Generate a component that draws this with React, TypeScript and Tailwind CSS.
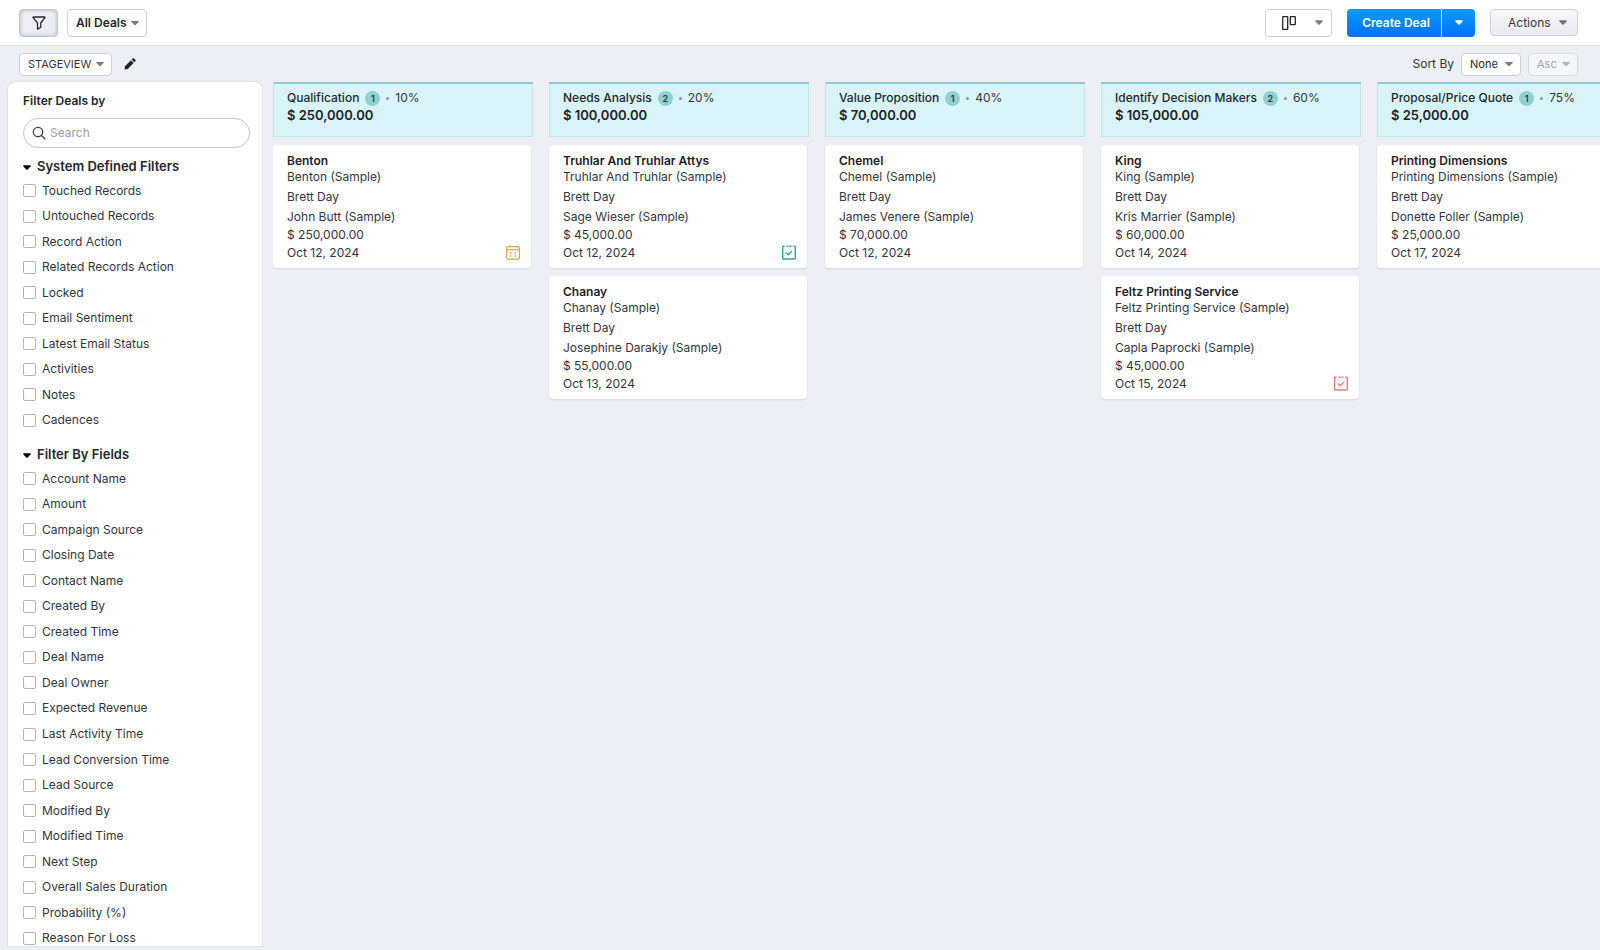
import { useState } from 'react';
import clsx from 'clsx';

type Activity = 'event' | 'task' | 'overdue';

interface Deal {
  name: string;
  account: string;
  contact: string;
  amount: string;
  closing: string;
  activity?: Activity;
}

interface Stage {
  name: string;
  probability: string;
  total: string;
  deals: Deal[];
}

const OWNER = 'Brett Day';

const STAGES: Stage[] = [
  {
    name: 'Qualification',
    probability: '10%',
    total: '$ 250,000.00',
    deals: [
      { name: 'Benton', account: 'Benton (Sample)', contact: 'John Butt (Sample)', amount: '$ 250,000.00', closing: 'Oct 12, 2024', activity: 'event' },
    ],
  },
  {
    name: 'Needs Analysis',
    probability: '20%',
    total: '$ 100,000.00',
    deals: [
      { name: 'Truhlar And Truhlar Attys', account: 'Truhlar And Truhlar (Sample)', contact: 'Sage Wieser (Sample)', amount: '$ 45,000.00', closing: 'Oct 12, 2024', activity: 'task' },
      { name: 'Chanay', account: 'Chanay (Sample)', contact: 'Josephine Darakjy (Sample)', amount: '$ 55,000.00', closing: 'Oct 13, 2024' },
    ],
  },
  {
    name: 'Value Proposition',
    probability: '40%',
    total: '$ 70,000.00',
    deals: [
      { name: 'Chemel', account: 'Chemel (Sample)', contact: 'James Venere (Sample)', amount: '$ 70,000.00', closing: 'Oct 12, 2024' },
    ],
  },
  {
    name: 'Identify Decision Makers',
    probability: '60%',
    total: '$ 105,000.00',
    deals: [
      { name: 'King', account: 'King (Sample)', contact: 'Kris Marrier (Sample)', amount: '$ 60,000.00', closing: 'Oct 14, 2024' },
      { name: 'Feltz Printing Service', account: 'Feltz Printing Service (Sample)', contact: 'Capla Paprocki (Sample)', amount: '$ 45,000.00', closing: 'Oct 15, 2024', activity: 'overdue' },
    ],
  },
  {
    name: 'Proposal/Price Quote',
    probability: '75%',
    total: '$ 25,000.00',
    deals: [
      { name: 'Printing Dimensions', account: 'Printing Dimensions (Sample)', contact: 'Donette Foller (Sample)', amount: '$ 25,000.00', closing: 'Oct 17, 2024' },
    ],
  },
];

const SYSTEM_FILTERS = [
  'Touched Records', 'Untouched Records', 'Record Action', 'Related Records Action', 'Locked',
  'Email Sentiment', 'Latest Email Status', 'Activities', 'Notes', 'Cadences',
];

const FIELD_FILTERS = [
  'Account Name', 'Amount', 'Campaign Source', 'Closing Date', 'Contact Name', 'Created By',
  'Created Time', 'Deal Name', 'Deal Owner', 'Expected Revenue', 'Last Activity Time',
  'Lead Conversion Time', 'Lead Source', 'Modified By', 'Modified Time', 'Next Step',
  'Overall Sales Duration', 'Probability (%)', 'Reason For Loss',
];

function Caret({ className }: { className?: string }) {
  return (
    <svg viewBox="0 0 8 5" className={clsx('w-2 h-[5px] shrink-0', className)} fill="currentColor" aria-hidden="true">
      <path d="M.9.3h6.2c.6 0 .9.7.5 1.1L4.6 4.5a.8.8 0 0 1-1.2 0L.4 1.4C0 1 .3.3.9.3Z" />
    </svg>
  );
}

interface PickerProps {
  label: string;
  value: string;
  className: string;
  caretClass: string;
  disabled?: boolean;
}

function Picker({ label, value, className, caretClass, disabled }: PickerProps) {
  return (
    <div className="relative flex">
      <select
        aria-label={label}
        disabled={disabled}
        defaultValue={value}
        className={clsx('appearance-none rounded border', className)}
      >
        <option>{value}</option>
      </select>
      <Caret className={clsx('absolute top-1/2 -translate-y-1/2 pointer-events-none', caretClass)} />
    </div>
  );
}

function ActivityIcon({ kind }: { kind: Activity }) {
  if (kind === 'event') {
    return (
      <svg viewBox="0 0 14 15" className="w-3.5 h-[15px] text-[#d9a441]" fill="none" stroke="currentColor" role="img" aria-label="Event">
        <rect x=".6" y="1.6" width="12.8" height="12.6" rx="1.6" strokeWidth="1.2" />
        <path d="M.8 4.8h12.4" strokeWidth="1.1" />
        <path d="M3.6.4v2M10.4.4v2" strokeWidth="1.3" />
        <path d="M3.8 8h1.6M8.6 8h1.6M3.8 11h1.6M8.6 11h1.6" strokeWidth="1.6" />
        <path d="M6.5 8h1M6.5 11h1" strokeWidth="1" opacity=".5" />
      </svg>
    );
  }
  return (
    <svg
      viewBox="0 0 14 15"
      className={clsx('w-3.5 h-[15px]', kind === 'task' ? 'text-[#2ea58c]' : 'text-[#dc7f7d]')}
      fill="none"
      stroke="currentColor"
      role="img"
      aria-label={kind === 'task' ? 'Task' : 'Overdue task'}
    >
      <path d="M2.6 1.2H1.3a.6.6 0 0 0-.6.6v11.4c0 .5.3.8.8.8h11c.5 0 .8-.3.8-.8V1.8a.6.6 0 0 0-.6-.6h-1.3" strokeWidth="1.4" />
      <path d="M4.6 1.2h4.8" strokeWidth="1.4" strokeDasharray="2 .8" />
      <path d="m4 7.6 2.2 2.1 3.8-3.8" strokeWidth="1.4" />
    </svg>
  );
}

function FilterGroup({ title, items, listClass }: { title: string; items: string[]; listClass: string }) {
  const [open, setOpen] = useState(true);

  return (
    <section>
      <button
        type="button"
        aria-expanded={open}
        onClick={() => setOpen(!open)}
        className="flex items-center gap-1.5 h-6 pt-0.5 text-[13px] font-semibold text-[#24262f]"
      >
        <Caret className="text-black" />
        {title}
      </button>
      {open && (
        <ul className={clsx('grid auto-rows-fr', listClass)}>
          {items.map(item => (
            <li key={item} className="flex items-center">
              <label className="flex items-center gap-1.5">
                <input type="checkbox" className="appearance-none w-[13px] h-[13px] rounded-xs border border-[#b4b4b8] bg-white checked:bg-[#0279ff]" />
                {item}
              </label>
            </li>
          ))}
        </ul>
      )}
    </section>
  );
}

function DealCard({ deal }: { deal: Deal }) {
  return (
    <article className="relative mr-0.5 rounded bg-white px-3.5 pt-2 pb-1.5 shadow-[0_1px_2px_rgba(40,50,80,0.12)]">
      <h3 className="leading-4 font-semibold text-[#1e2029]">{deal.name}</h3>
      <p className="leading-4">{deal.account}</p>
      <p className="leading-[23px]">{OWNER}</p>
      <p className="leading-[18px]">{deal.contact}</p>
      <p className="leading-[18px]">{deal.amount}</p>
      <p className="leading-[18px]">{deal.closing}</p>
      {deal.activity && (
        <span className="absolute right-[11px] bottom-2">
          <ActivityIcon kind={deal.activity} />
        </span>
      )}
    </article>
  );
}

function StageColumn({ stage }: { stage: Stage }) {
  return (
    <section className="w-[260px] shrink-0 flex flex-col gap-2">
      <header className="h-[55px] border border-[#c3e6ea] border-t-2 border-t-[#8ecbcd] bg-[#d9f4f8] px-[13px] pt-[5px]">
        <div className="flex items-center h-[18px]">
          <h2 className="font-medium text-[#24262f]">{stage.name}</h2>
          <span className="ml-1.5 w-[15px] h-[15px] rounded-full bg-[#92cfd0] text-[9px] leading-[15px] font-semibold text-center">
            {stage.deals.length}
          </span>
          <span className="mx-1.5 w-[3px] h-[3px] rounded-full bg-[#8a9a9e]" />
          <span>{stage.probability}</span>
        </div>
        <p className="leading-4 text-[13px] font-semibold text-[#1e2029]">{stage.total}</p>
      </header>
      {stage.deals.map(deal => (
        <DealCard key={deal.name} deal={deal} />
      ))}
    </section>
  );
}

export default function App() {
  const [showFilter, setShowFilter] = useState(true);

  return (
    <div className="h-screen flex flex-col bg-[#edeff4] font-['Inter',sans-serif] text-xs text-[#33353d]">
      <header className="flex items-center justify-between h-[46px] shrink-0 pl-[19px] pr-[22px] bg-white border-b border-[#dfe0e6]">
        <div className="flex items-center gap-[9px]">
          <button
            type="button"
            aria-label="Filter"
            aria-pressed={showFilter}
            onClick={() => setShowFilter(!showFilter)}
            className="flex items-center justify-center w-[39px] h-7 rounded border border-[#c4c6cf] bg-[#eceef4] shadow-[inset_0_0_4px_rgba(60,70,90,0.35)]"
          >
            <svg viewBox="0 0 14 14" className="w-3.5 h-3.5" fill="none" stroke="#24262f" strokeWidth="1.3" strokeLinejoin="round">
              <path d="M1.4 1h11.2c.3 0 .5.4.3.7L8.8 7v4.2l-3.3 1.9V7L1.1 1.7c-.2-.3 0-.7.3-.7Z" />
            </svg>
          </button>
          <Picker label="Deal view" value="All Deals" className="w-20 h-7 pl-2 border-[#cfd0d6] bg-white font-semibold text-[#24262f]" caretClass="right-2 text-[#7d7f87]" />
        </div>

        <div className="flex items-center gap-[15px]">
          <button type="button" aria-label="Kanban view" className="flex items-center justify-between w-[67px] h-7 pl-4 pr-2 rounded border border-[#cfd0d6] bg-white">
            <svg viewBox="0 0 14 14" className="w-3.5 h-3.5" fill="none" stroke="#24262f" strokeWidth="1.3">
              <rect x=".7" y=".7" width="5" height="12.6" rx=".4" />
              <rect x="8.3" y=".7" width="5" height="8" rx=".4" />
            </svg>
            <Caret className="text-[#7d7f87]" />
          </button>
          <div className="flex h-7 rounded overflow-hidden bg-linear-to-b from-[#0d9bff] to-[#0670f5] text-white">
            <button type="button" className="w-[94px] pl-1 font-semibold">Create Deal</button>
            <button type="button" aria-label="More create options" className="flex items-center justify-center w-[34px] border-l border-white/80">
              <Caret />
            </button>
          </div>
          <button type="button" className="flex items-center justify-between w-[88px] h-[27px] pl-[17px] pr-2.5 rounded border border-[#cfd0dc] bg-linear-to-b from-[#f8f8fc] to-[#e9eaf3]">
            Actions
            <Caret className="text-[#6d6f77]" />
          </button>
        </div>
      </header>

      <div className="flex items-center justify-between h-9 shrink-0 pl-[19px] pr-[22px]">
        <div className="flex items-center gap-3">
          <Picker label="Kanban view" value="STAGEVIEW" className="w-[93px] h-[23px] pl-2 border-[#cfd0d6] bg-white text-[11px]" caretClass="right-2 text-[#7d7f87]" />
          <button type="button" aria-label="Edit view">
            <svg viewBox="0 0 12 12" className="w-3 h-3" fill="#24262f">
              <path d="M1 8.2 6.9 2.3l2.7 2.7-5.9 5.9L.6 11.4Z" />
              <path d="M7.6 1.6 8.7.5c.4-.4 1-.4 1.4 0l1.3 1.3c.4.4.4 1 0 1.4l-1.1 1.1Z" />
            </svg>
          </button>
        </div>
        <div className="flex items-center gap-[7px]">
          <span>Sort By</span>
          <Picker label="Sort by" value="None" className="w-[60px] h-[23px] pl-2 border-[#cfd0d6] bg-white text-[11px] text-[#24262f]" caretClass="right-2 text-[#7d7f87]" />
          <Picker label="Sort order" value="Asc" disabled className="w-[50px] h-[23px] pl-2 border-[#dcdde3] bg-[#f5f6f9] text-[11px] text-[#a5a7af]" caretClass="right-2 text-[#b4b6be]" />
        </div>
      </div>

      <div className="flex flex-1 min-h-0 gap-[11px] pl-2 pb-1">
        {showFilter && (
          <aside className="w-[254px] shrink-0 overflow-y-auto [scrollbar-width:none] rounded-t-lg bg-white px-[15px] shadow-[0_0_2px_rgba(40,50,80,0.25)]">
            <h2 className="pt-2.5 leading-[18px] font-semibold text-[#24262f]">Filter Deals by</h2>
            <label className="flex items-center gap-1 h-[30px] mt-2 mb-1.5 mr-[-3px] px-2 rounded-full border border-[#c6c7cc]">
              <svg viewBox="0 0 14 14" className="w-3.5 h-3.5 shrink-0" fill="none" stroke="#3c3e46" strokeWidth="1.3" strokeLinecap="round">
                <circle cx="6" cy="6" r="4.7" />
                <path d="m9.5 9.5 3.4 3.2" />
              </svg>
              <input type="search" placeholder="Search" aria-label="Search filters" className="w-full outline-none placeholder:text-[#9b9da4]" />
            </label>
            <div className="flex flex-col gap-[9px]">
              <FilterGroup title="System Defined Filters" items={SYSTEM_FILTERS} listClass="h-[255px]" />
              <FilterGroup title="Filter By Fields" items={FIELD_FILTERS} listClass="h-[485px]" />
            </div>
          </aside>
        )}

        <main className="flex flex-1 min-w-0 gap-4 overflow-x-auto [scrollbar-width:none]">
          {STAGES.map(stage => (
            <StageColumn key={stage.name} stage={stage} />
          ))}
        </main>
      </div>
    </div>
  );
}
